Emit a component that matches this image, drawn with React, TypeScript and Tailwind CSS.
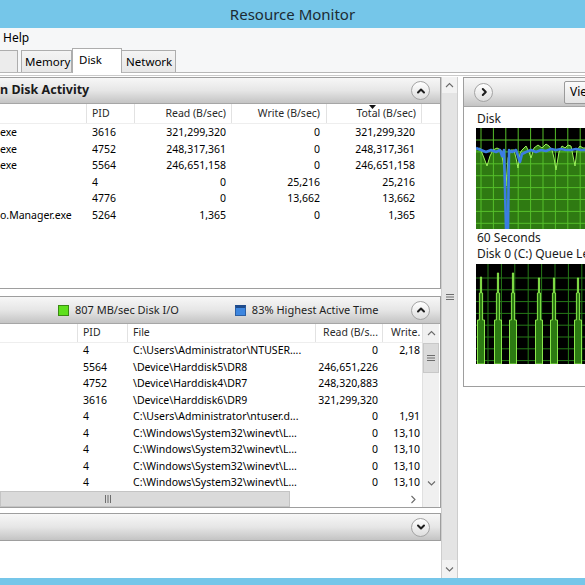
import React from 'react';

// Resource Monitor, onglet Disk

const procRows = [
  { img: 'exe', pid: '3616', read: '321,299,320', write: '0', total: '321,299,320' },
  { img: 'exe', pid: '4752', read: '248,317,361', write: '0', total: '248,317,361' },
  { img: 'exe', pid: '5564', read: '246,651,158', write: '0', total: '246,651,158' },
  { img: '', pid: '4', read: '0', write: '25,216', total: '25,216' },
  { img: '', pid: '4776', read: '0', write: '13,662', total: '13,662' },
  { img: 'o.Manager.exe', pid: '5264', read: '1,365', write: '0', total: '1,365' },
];

const fileRows = [
  { pid: '4', file: 'C:\\Users\\Administrator\\NTUSER....', read: '0', write: '2,18' },
  { pid: '5564', file: '\\Device\\Harddisk5\\DR8', read: '246,651,226', write: '' },
  { pid: '4752', file: '\\Device\\Harddisk4\\DR7', read: '248,320,883', write: '' },
  { pid: '3616', file: '\\Device\\Harddisk6\\DR9', read: '321,299,320', write: '' },
  { pid: '4', file: 'C:\\Users\\Administrator\\ntuser.d...', read: '0', write: '1,91' },
  { pid: '4', file: 'C:\\Windows\\System32\\winevt\\L...', read: '0', write: '13,10' },
  { pid: '4', file: 'C:\\Windows\\System32\\winevt\\L...', read: '0', write: '13,10' },
  { pid: '4', file: 'C:\\Windows\\System32\\winevt\\L...', read: '0', write: '13,10' },
  { pid: '4', file: 'C:\\Windows\\System32\\winevt\\L...', read: '0', write: '13,10' },
];

function CircleBtn({ dir }: { dir: 'up' | 'down' | 'right' }) {
  const d = dir === 'up' ? 'M2 6.5 L5 3.5 L8 6.5' : dir === 'down' ? 'M2 3.5 L5 6.5 L8 3.5' : 'M3.8 2 L6.8 5 L3.8 8';
  return (
    <div className="w-[19px] h-[19px] rounded-full border border-[#a4a4a4] bg-linear-to-b from-white to-[#dedede] flex items-center justify-center">
      <svg width="10" height="10" viewBox="0 0 10 10">
        <path d={d} stroke="#1e1e1e" strokeWidth="2" fill="none" strokeLinecap="round" strokeLinejoin="round" />
      </svg>
    </div>
  );
}

function Caret({ dir }: { dir: 'up' | 'down' | 'right' }) {
  const d = dir === 'up' ? 'M1 5 L4.5 1.5 L8 5' : dir === 'down' ? 'M1 1.5 L4.5 5 L8 1.5' : 'M2.5 1 L6 4.5 L2.5 8';
  return (
    <svg width="9" height={dir === 'right' ? 9 : 7} viewBox={dir === 'right' ? '0 0 9 9' : '0 0 9 7'}>
      <path d={d} stroke="#6b6b6b" strokeWidth="1.1" fill="none" />
    </svg>
  );
}

function Grip({ vertical }: { vertical?: boolean }) {
  // petites lignes de la poignée de défilement
  return vertical ? (
    <svg width="8" height="8" viewBox="0 0 8 8">
      <path d="M0 1.5 H8 M0 4 H8 M0 6.5 H8" stroke="#6d6d6d" strokeWidth="1" />
    </svg>
  ) : (
    <svg width="8" height="8" viewBox="0 0 8 8">
      <path d="M1.5 0 V8 M4 0 V8 M6.5 0 V8" stroke="#6d6d6d" strokeWidth="1" />
    </svg>
  );
}

const headerCls = 'bg-linear-to-b from-[#f7f7f7] via-[#e6e6e6] to-[#c4c4c4] border-b border-[#a6a6a6] flex items-center';

function DiskChart() {
  const green = [
    [0, 22], [4, 20], [8, 30], [11, 38], [14, 28], [17, 22], [21, 20], [25, 22], [28, 40], [30, 58], [32, 30],
    [35, 22], [38, 22], [40, 30], [42, 40], [44, 25], [46, 22], [50, 18], [53, 24], [55, 30], [58, 20], [62, 17],
    [66, 20], [70, 16], [73, 18], [76, 22], [78, 30], [80, 42], [83, 24], [86, 18], [89, 20], [92, 17], [95, 18],
    [97, 28], [99, 38], [101, 22], [104, 18], [107, 20], [112, 20],
  ];
  const blue = [
    [0, 20], [5, 22], [10, 24], [15, 22], [20, 24], [24, 22], [26, 28], [28, 22], [30, 101], [32, 101], [33, 22],
    [36, 24], [40, 22], [42, 28], [44, 34], [46, 26], [50, 24], [55, 22], [60, 24], [65, 22], [70, 23], [75, 21],
    [80, 22], [85, 21], [90, 22], [95, 22], [100, 21], [105, 22], [112, 22],
  ];
  const pts = (a: number[][]) => a.map(p => p.join(',')).join(' ');
  return (
    <svg width="112" height="101" viewBox="0 0 112 101" className="block">
      <rect width="112" height="101" fill="#000" />
      <polygon points={`0,101 ${pts(green)} 112,101`} fill="#2f7a12" />
      {Array.from({ length: 9 }, (_, i) => (
        <line key={'v' + i} x1={5 + i * 12.4} y1="0" x2={5 + i * 12.4} y2="101" stroke="#56bf2b" strokeWidth="1" />
      ))}
      {Array.from({ length: 8 }, (_, i) => (
        <line key={'h' + i} x1="0" y1={12 + i * 11.9} x2="112" y2={12 + i * 11.9} stroke="#56bf2b" strokeWidth="1" />
      ))}
      <polyline points={pts(green)} fill="none" stroke="#9cf25a" strokeWidth="1" />
      <polyline points={pts(blue)} fill="none" stroke="#3b7de2" strokeWidth="2.6" strokeLinejoin="round" />
    </svg>
  );
}

function QueueChart() {
  const spikes = [
    { x: 5, top: 13 }, { x: 22, top: 9 }, { x: 37, top: 9 }, { x: 63, top: 14 }, { x: 78, top: 14 }, { x: 102, top: 14 },
  ];
  return (
    <svg width="112" height="100" viewBox="0 0 112 100" className="block">
      <rect width="112" height="100" fill="#000" />
      {Array.from({ length: 9 }, (_, i) => (
        <line key={'v' + i} x1={12 + i * 13.4} y1="0" x2={12 + i * 13.4} y2="100" stroke="#267a18" strokeWidth="1" />
      ))}
      {Array.from({ length: 8 }, (_, i) => (
        <line key={'h' + i} x1="0" y1={14 + i * 11.8} x2="112" y2={14 + i * 11.8} stroke="#267a18" strokeWidth="1" />
      ))}
      {spikes.map(s => (
        <polygon
          key={s.x}
          points={`${s.x - 0.6},${s.top} ${s.x + 0.6},${s.top} ${s.x + 0.6},29 ${s.x + 1.6},29 ${s.x + 1.6},56 ${s.x + 3.5},56 ${s.x + 3.5},100 ${s.x - 3.5},100 ${s.x - 3.5},56 ${s.x - 1.6},56 ${s.x - 1.6},29 ${s.x - 0.6},29`}
          fill="#2c7a12"
          stroke="#8be84d"
          strokeWidth="1"
        />
      ))}
    </svg>
  );
}

export default function App() {
  return (
    <div className="w-[585px] h-[585px] overflow-hidden bg-white flex flex-col font-['Noto_Sans',sans-serif] text-black">
      {/* Barre de titre */}
      <div className="h-[28px] shrink-0 bg-[#75c6e9] flex items-center justify-center text-[15px] text-[#1c2b33]">
        Resource Monitor
      </div>

      {/* Menu */}
      <div className="h-[19px] shrink-0 bg-[#f6f7f8] flex items-center pl-[3px] text-[12px]">Help</div>

      {/* Onglets */}
      <div className="h-[26px] shrink-0 bg-[#f6f7f8] border-b border-[#b7b7b7] flex items-end text-[11.5px]">
        <div className="w-[18px] h-[22px] border-r border-t border-[#adadad] bg-[#ececec]" />
        <div className="ml-[3px] w-[51px] h-[22px] border border-b-0 border-[#adadad] bg-linear-to-b from-[#f4f4f4] to-[#e7e7e7] pl-[3px] flex items-center whitespace-nowrap">
          Memory
        </div>
        <div className="w-[50px] h-[25px] -mb-px relative z-10 border border-b-0 border-[#adadad] bg-white pl-[6px] flex items-start pt-[2px]">
          Disk
        </div>
        <div className="w-[54px] h-[22px] border border-l-0 border-b-0 border-[#adadad] bg-linear-to-b from-[#f4f4f4] to-[#e7e7e7] pl-[4px] flex items-center whitespace-nowrap">
          Network
        </div>
      </div>
      <div className="h-[4px] shrink-0 bg-white flex flex-col justify-end pb-px">
        <div className="h-px bg-[#cacaca]" />
      </div>

      {/* Zone principale */}
      <div className="flex-1 flex min-h-0">
        {/* Colonne gauche */}
        <div className="w-[441px] shrink-0 flex flex-col">
          {/* Processus avec activité disque */}
          <div className="h-[212px] shrink-0 border-t border-r border-b border-[#9e9e9e] flex flex-col">
            <div className={`h-[26px] shrink-0 ${headerCls} justify-between pr-[10px]`}>
              <span className="text-[12.5px] font-bold text-[#1a1a1a]">n Disk Activity</span>
              <CircleBtn dir="up" />
            </div>
            <div className="h-[20px] shrink-0 flex text-[10.5px] text-[#2a2a2a] bg-white border-b border-[#eeeeee]">
              <div className="w-[87px] border-r border-[#e2e2e2]" />
              <div className="w-[48px] border-r border-[#e2e2e2] pl-[5px] flex items-center">PID</div>
              <div className="w-[97px] border-r border-[#e2e2e2] pr-[5px] flex items-center justify-end">Read (B/sec)</div>
              <div className="w-[95px] border-r border-[#e2e2e2] pr-[6px] flex items-center justify-end">Write (B/sec)</div>
              <div className="w-[95px] border-r border-[#e2e2e2] pr-[5px] flex items-center justify-end relative">
                <svg width="7" height="4" viewBox="0 0 7 4" className="absolute left-[42px] top-[1px]">
                  <path d="M0 0 H7 L3.5 4 Z" fill="#111" />
                </svg>
                Total (B/sec)
              </div>
              <div className="flex-1" />
            </div>
            <div className="flex-1 pt-[1px] text-[10.5px]">
              {procRows.map((r, i) => (
                <div key={i} className="h-[16.5px] flex items-center">
                  <div className="w-[87px] whitespace-nowrap">{r.img}</div>
                  <div className="w-[48px] pl-[5px]">{r.pid}</div>
                  <div className="w-[97px] pr-[6px] text-right">{r.read}</div>
                  <div className="w-[95px] pr-[7px] text-right">{r.write}</div>
                  <div className="w-[95px] pr-[7px] text-right">{r.total}</div>
                </div>
              ))}
            </div>
          </div>

          <div className="h-[7px] shrink-0" />

          {/* Disque */}
          <div className="h-[212px] shrink-0 border-t border-r border-b border-[#9e9e9e] flex flex-col">
            <div className={`h-[27px] shrink-0 ${headerCls} pr-[10px] text-[11px] text-[#1e1e1e] whitespace-nowrap`}>
              <div className="ml-[58px] w-[11px] h-[11px] bg-[#5ee01c] border border-[#3a8a12]" />
              <span className="ml-[6px]">807 MB/sec Disk I/O</span>
              <div className="ml-[56px] w-[11px] h-[11px] bg-[#3d86df] border border-[#2c5fa3] border-t-[3px] border-t-[#1e4a8a]" />
              <span className="ml-[6px]">83% Highest Active Time</span>
              <div className="ml-auto">
                <CircleBtn dir="up" />
              </div>
            </div>
            <div className="flex-1 flex min-h-0">
              <div className="w-[422px] flex flex-col text-[10.5px]">
                <div className="h-[19px] shrink-0 flex text-[#2a2a2a] border-b border-[#eeeeee] whitespace-nowrap">
                  <div className="w-[78px] border-r border-[#e2e2e2]" />
                  <div className="w-[50px] border-r border-[#e2e2e2] pl-[5px] flex items-center">PID</div>
                  <div className="w-[188px] border-r border-[#e2e2e2] pl-[5px] flex items-center">File</div>
                  <div className="w-[67px] border-r border-[#e2e2e2] pr-[4px] flex items-center justify-end">Read (B/s...</div>
                  <div className="flex-1 pl-[8px] flex items-center overflow-hidden">Write.</div>
                </div>
                <div className="h-[148px] shrink-0 overflow-hidden">
                  {fileRows.map((r, i) => (
                    <div key={i} className="h-[16.5px] flex items-center whitespace-nowrap">
                      <div className="w-[78px] shrink-0" />
                      <div className="w-[50px] shrink-0 pl-[5px]">{r.pid}</div>
                      <div className="w-[188px] shrink-0 pl-[5px] overflow-visible">{r.file}</div>
                      <div className="w-[67px] shrink-0 pr-[5px] text-right">{r.read}</div>
                      <div className="flex-1 pr-[2px] text-right overflow-hidden">{r.write}</div>
                    </div>
                  ))}
                </div>
                {/* Défilement horizontal */}
                <div className="flex-1 flex bg-white">
                  <div className="w-[290px] bg-[#dadada] border border-[#c4c4c4] flex items-center pl-[103px]">
                    <Grip />
                  </div>
                  <div className="w-[115px]" />
                  <div className="w-[17px] flex items-center justify-center">
                    <Caret dir="right" />
                  </div>
                </div>
              </div>
              {/* Défilement vertical */}
              <div className="w-[17px] flex flex-col bg-[#f0f0f0] border-l border-[#e0e0e0]">
                <div className="h-[19px] flex items-center justify-center">
                  <Caret dir="up" />
                </div>
                <div className="h-[30px] bg-[#dadada] border border-[#c8c8c8] flex items-center justify-center">
                  <Grip vertical />
                </div>
                <div className="flex-1" />
                <div className="h-[16px] flex items-center justify-center">
                  <Caret dir="down" />
                </div>
                <div className="h-[16px] bg-[#f0f0f0]" />
              </div>
            </div>
          </div>

          <div className="h-[5px] shrink-0" />

          {/* Section repliée */}
          <div className="h-[28px] shrink-0 border-t border-r border-b border-[#9e9e9e]">
            <div className={`h-[26px] ${headerCls} border-b-0 justify-end pr-[10px]`}>
              <CircleBtn dir="down" />
            </div>
          </div>
          <div className="flex-1" />
        </div>

        {/* Barre de séparation */}
        <div className="w-[17px] shrink-0 bg-[#e4e4e4] border-l border-r border-[#cdcdcd] flex flex-col items-center">
          <div className="h-[16px] w-full bg-[#f2f2f2] flex items-center justify-center">
            <Caret dir="up" />
          </div>
          <div className="h-[196px]" />
          <div className="h-[16px] flex items-center justify-center">
            <Grip vertical />
          </div>
          <div className="flex-1" />
          <div className="h-[18px] w-full bg-[#f2f2f2] flex items-center justify-center">
            <Caret dir="down" />
          </div>
        </div>

        <div className="w-[5px] shrink-0" />

        {/* Panneau graphique */}
        <div className="flex-1 min-w-0 overflow-hidden self-start h-[310px] border-t border-l border-b border-[#9e9e9e] flex flex-col">
          <div className={`h-[29px] shrink-0 ${headerCls} pl-[10px]`}>
            <CircleBtn dir="right" />
            <div className="ml-auto mr-[-24px] shrink-0 w-[45px] h-[23px] border border-[#9a9a9a] rounded-[2px] bg-linear-to-b from-[#fbfbfb] to-[#e3e3e3] pl-[5px] flex items-center text-[12px]">
              Views
            </div>
          </div>
          <div className="pl-[12px] text-[12px] text-[#1a1a1a]">
            <div className="mt-[5px] h-[14px] leading-[14px] ml-px">Disk</div>
            <div className="mt-[2px]">
              <DiskChart />
            </div>
            <div className="mt-[2px] h-[14px] leading-[14px] ml-px">60 Seconds</div>
            <div className="mt-[2px] h-[14px] leading-[14px] ml-px whitespace-nowrap">Disk 0 (C:) Queue Length</div>
            <div className="mt-[3px]">
              <QueueChart />
            </div>
          </div>
        </div>
      </div>

      {/* Barre du bas */}
      <div className="h-[7px] shrink-0 bg-[#75c6e9]" />
    </div>
  );
}
